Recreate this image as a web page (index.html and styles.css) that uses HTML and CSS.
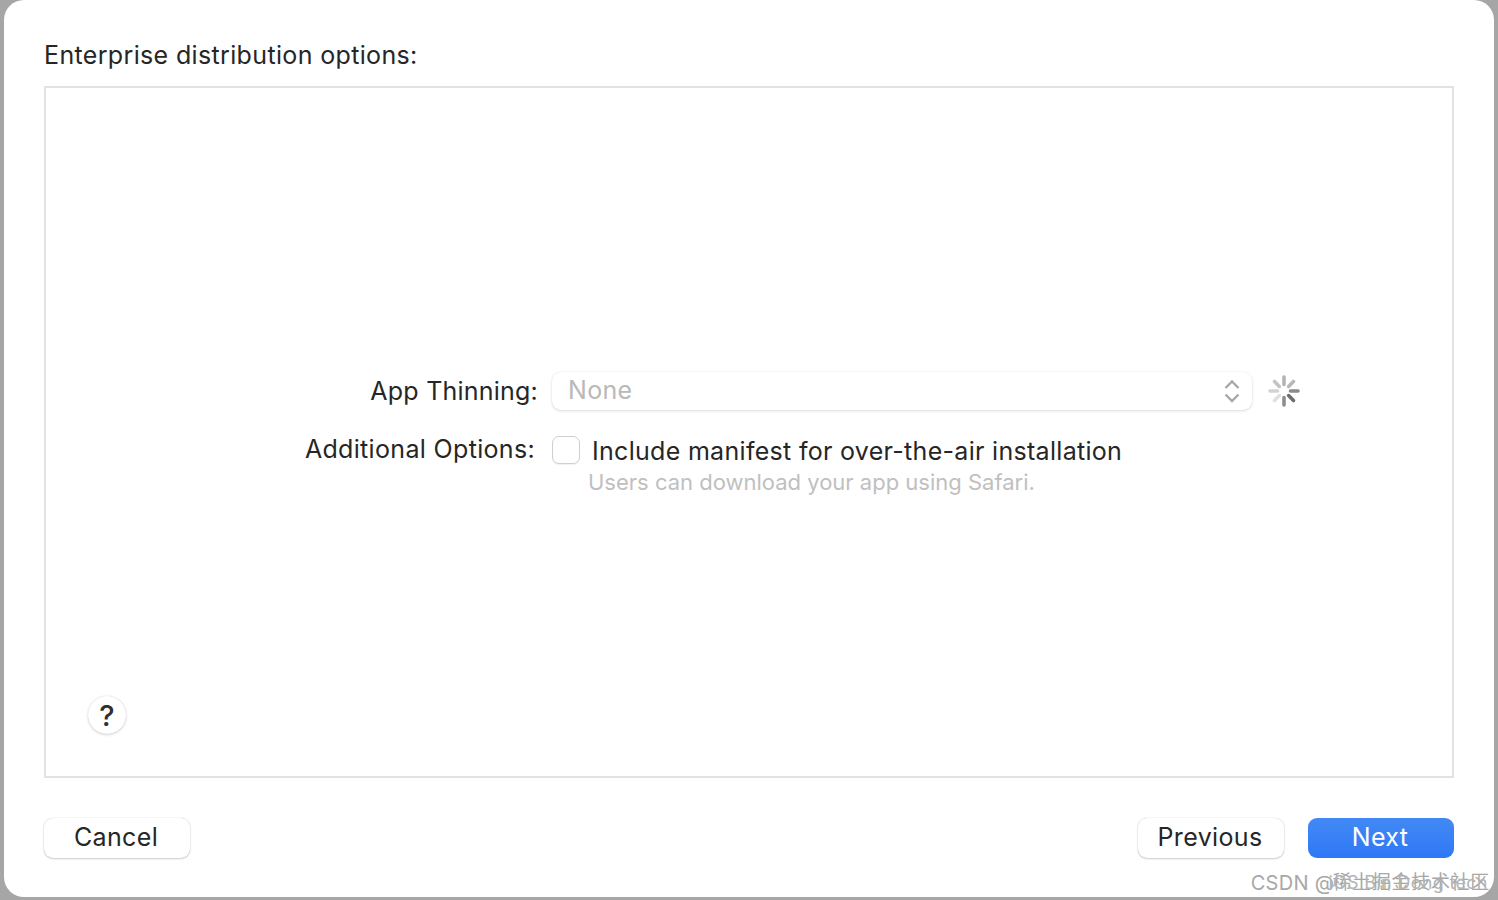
FILE: index.html
```html
<!DOCTYPE html>
<html lang="en">
  <head>
    <meta charset="UTF-8" />
    <title>Enterprise distribution options</title>
    <link rel="stylesheet" href="styles.css">
  </head>
  <body>
    <div class="dialog">
      <h2 class="title">Enterprise distribution options:</h2>

      <div class="panel">
        <div class="form-row">
          <span class="row-label thinning-label">App Thinning:</span>
          <div class="select">
            <span class="select-value">None</span>
            <svg class="chevrons" width="16" height="24" viewBox="0 0 16 24">
              <path d="M1.5 9 L8 2.5 L14.5 9" />
              <path d="M1.5 15.5 L8 22 L14.5 15.5" />
            </svg>
          </div>
          <svg class="spinner" width="32" height="32" viewBox="0 0 32 32">
            <line x1="16" y1="9.5" x2="16" y2="2" stroke="#b4b4b4" />
            <line x1="20.6" y1="11.4" x2="25.5" y2="6.5" stroke="#b8b8b8" />
            <line x1="22.5" y1="16" x2="30" y2="16" stroke="#8a8a8a" />
            <line x1="20.6" y1="20.6" x2="25.5" y2="25.5" stroke="#6e6e6e" />
            <line x1="16" y1="22.5" x2="16" y2="30" stroke="#8e8e8e" />
            <line x1="11.4" y1="20.6" x2="6.5" y2="25.5" stroke="#e0e0e0" />
            <line x1="9.5" y1="16" x2="2" y2="16" stroke="#d2d2d2" />
            <line x1="11.4" y1="11.4" x2="6.5" y2="6.5" stroke="#c4c4c4" />
          </svg>
        </div>

        <div class="form-row options-row">
          <span class="row-label options-label">Additional Options:</span>
          <span class="checkbox"></span>
          <div class="option-text">
            <div class="option-title">Include manifest for over-the-air installation</div>
            <div class="option-hint">Users can download your app using Safari.</div>
          </div>
        </div>

        <button class="help-btn" type="button">?</button>
      </div>

      <div class="actions">
        <button class="btn" type="button">Cancel</button>
        <div class="actions-right">
          <button class="btn" type="button">Previous</button>
          <button class="btn btn-primary" type="button">Next</button>
        </div>
      </div>

      <div class="watermark">
        <span>CSDN @</span><span class="mark-text">稀土掘金技术社区<span class="mark-over">iOS Bin Dong tech</span></span>
      </div>
    </div>
  </body>
</html>
```

FILE: styles.css
```css
html,
body {
  margin: 0;
  height: 900px;
  overflow: hidden;
}
body {
  background: #a6a6a6;
  font-family: Inter, "Noto Sans CJK SC", sans-serif;
  color: #262626;
  padding: 0 4px 3px;
  box-sizing: border-box;
}
.dialog {
  position: relative;
  height: 897px;
  background: #fff;
  border-radius: 20px;
  padding: 0 40px;
  box-sizing: border-box;
  display: flex;
  flex-direction: column;
}
.title {
  margin: 0;
  height: 47px;
  padding-top: 39px;
  font-size: 25px;
  font-weight: 400;
  line-height: 32px;
  letter-spacing: 0.35px;
}
.panel {
  flex: none;
  height: 692px;
  border: 2px solid #e2e2e2;
  box-sizing: border-box;
  padding-top: 284px;
  display: flex;
  flex-direction: column;
}
.form-row {
  display: flex;
  align-items: center;
  height: 38px;
  font-size: 25px;
  letter-spacing: 0.3px;
}
.row-label {
  text-align: right;
  flex: none;
}
.thinning-label {
  width: 492px;
  margin-right: 14px;
  letter-spacing: 0.22px;
}
.options-label {
  width: 489px;
  margin-right: 17px;
  line-height: 28px;
  margin-top: -1px;
  letter-spacing: 0.33px;
}
.select {
  width: 700px;
  height: 38px;
  border-radius: 9px;
  box-sizing: border-box;
  padding: 0 12px 2px 16px;
  display: flex;
  align-items: center;
  justify-content: space-between;
  background: #fff;
  box-shadow: 0 0 1px rgba(0, 0, 0, 0.1), 0 1px 3px rgba(0, 0, 0, 0.14);
}
.select-value {
  color: #b9b9b9;
}
.chevrons {
  fill: none;
  stroke: #a8a8a8;
  stroke-width: 2.4;
  margin-top: 2px;
}
.spinner {
  margin-left: 16px;
  stroke-width: 3.6;
  stroke-linecap: round;
}
.options-row {
  margin-top: 26px;
  align-items: flex-start;
  height: auto;
}
.checkbox {
  flex: none;
  width: 28px;
  height: 28px;
  border: 1px solid #cfcfcf;
  border-radius: 7px;
  box-sizing: border-box;
  background: #fff;
  box-shadow: 0 1px 1px rgba(0, 0, 0, 0.06);
}
.option-text {
  margin-left: 12px;
}
.option-title {
  line-height: 30px;
}
.option-hint {
  margin-left: -4px;
  margin-top: 1px;
  font-size: 22px;
  line-height: 30px;
  letter-spacing: 0;
  color: #c0c0c0;
}
.help-btn {
  width: 38px;
  height: 38px;
  margin: auto 0 42px 42px;
  padding: 0;
  border: none;
  border-radius: 50%;
  background: #fff;
  color: #303030;
  font-family: inherit;
  font-size: 29px;
  font-weight: 500;
  box-shadow: 0 0 1px rgba(0, 0, 0, 0.2), 0 1px 3px rgba(0, 0, 0, 0.16);
}
.actions {
  display: flex;
  justify-content: space-between;
  margin-top: 40px;
}
.actions-right {
  display: flex;
  gap: 24px;
}
.btn {
  width: 146px;
  height: 40px;
  padding: 0 2px 2px 0;
  border: none;
  border-radius: 9px;
  background: #fff;
  color: #262626;
  font-family: inherit;
  font-size: 25px;
  letter-spacing: 0.35px;
  box-shadow: 0 0 1px rgba(0, 0, 0, 0.28), 0 1px 2px rgba(0, 0, 0, 0.18);
}
.btn-primary {
  background: linear-gradient(#4289f5, #2f78f6);
  color: #fff;
  box-shadow: none;
}
.watermark {
  position: absolute;
  right: 4px;
  bottom: 1px;
  display: flex;
  font-size: 20px;
  line-height: 26px;
  color: #a8a8a8;
  letter-spacing: 0.3px;
}
.mark-text {
  position: relative;
  font-size: 19px;
  letter-spacing: 0.7px;
  margin-left: -2px;
}
.mark-over {
  position: absolute;
  left: -4px;
  top: 0;
  white-space: nowrap;
  color: #b4b4b4;
  font-size: 18px;
  letter-spacing: 0.3px;
}
```
